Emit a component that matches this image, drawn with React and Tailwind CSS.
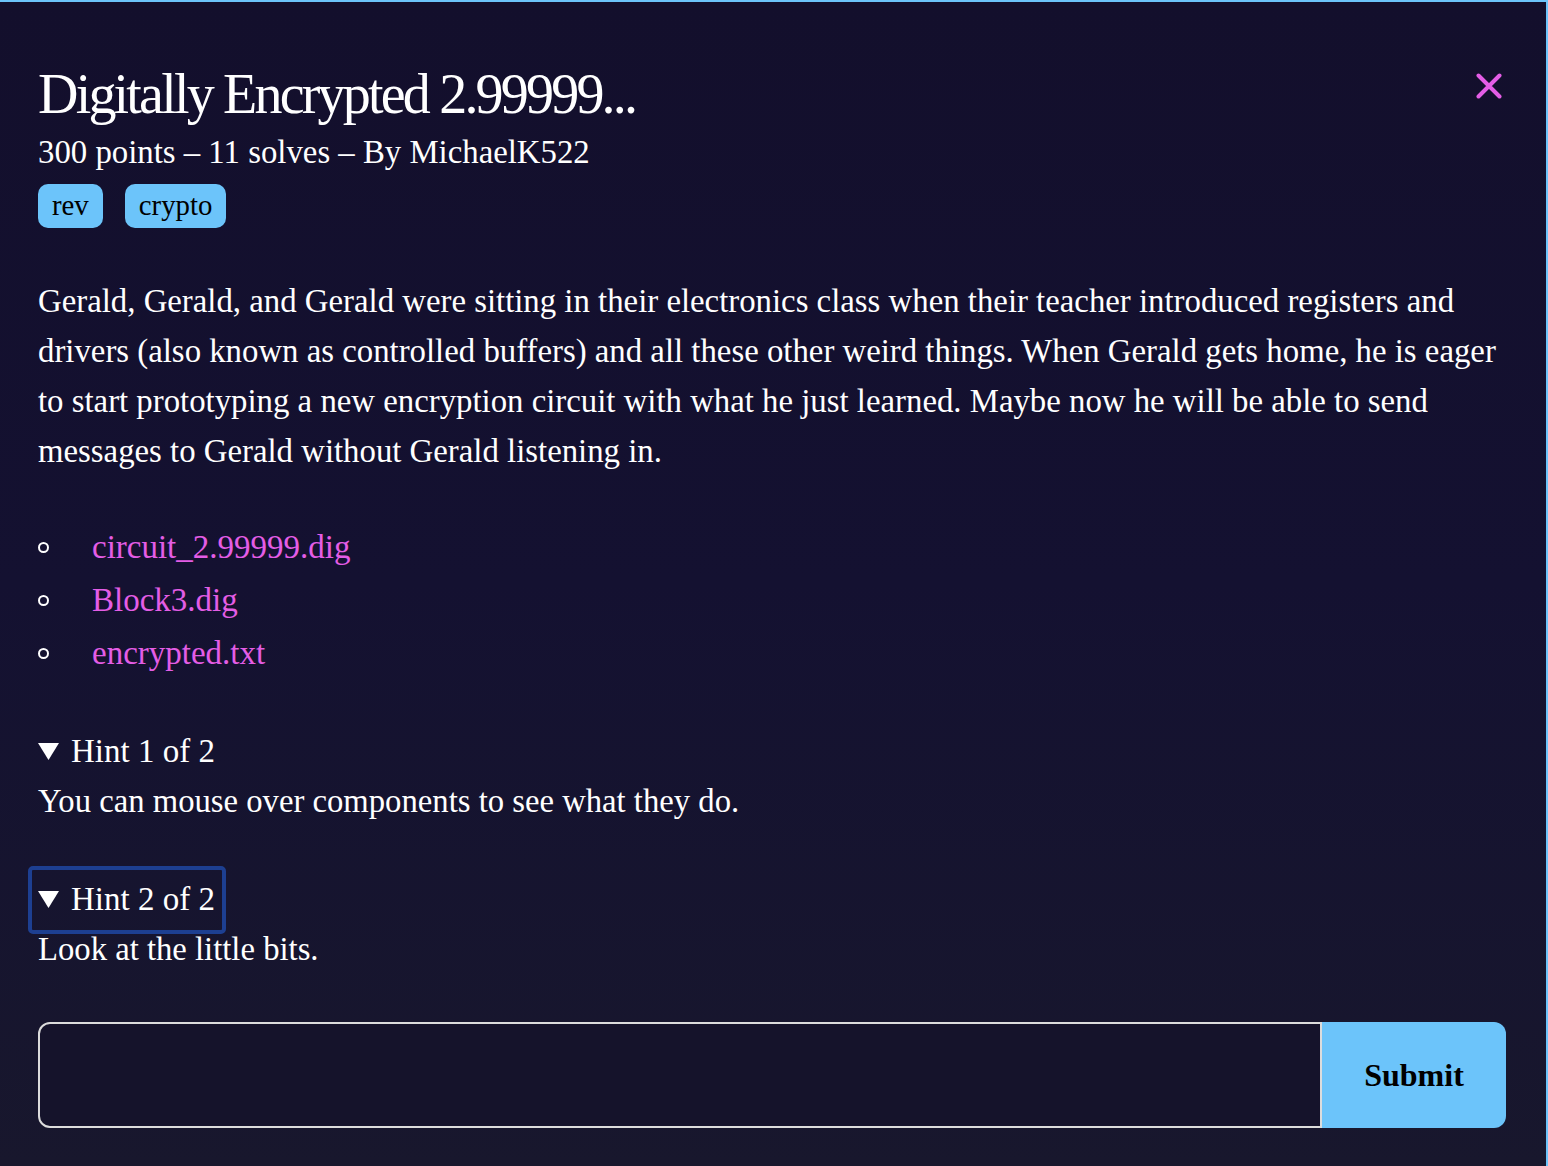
import React from "react";

const serif = { fontFamily: '"Liberation Serif", "Times New Roman", serif' };

function Bullet({ children }) {
  return (
    <li className="flex items-center h-[53px]">
      <span className="w-[11px] h-[11px] rounded-full border-2 border-white ml-[38px] mr-[43px] shrink-0" />
      <a className="text-[33px] text-[#e45de6] leading-none" href="#">{children}</a>
    </li>
  );
}

function Tri() {
  return (
    <svg width="21" height="17" viewBox="0 0 21 17" className="mr-[12px] shrink-0">
      <path d="M0 0H21L10.5 17Z" fill="white" />
    </svg>
  );
}

export default function App() {
  return (
    <div
      className="w-[1548px] h-[1166px] overflow-hidden border-t-2 border-r-2 border-[#6cc4fa] bg-gradient-to-b from-[#130f2c] via-[#141131] to-[#18172d] text-white relative"
      style={serif}
    >
      <button className="absolute left-[1475px] top-[70px] w-[28px] h-[28px] flex items-center justify-center">
        <svg width="26" height="26" viewBox="0 0 26 26" fill="none">
          <path d="M2.5 2.5L23.5 23.5M23.5 2.5L2.5 23.5" stroke="#e45de6" strokeWidth="4" strokeLinecap="round" />
        </svg>
      </button>
      <div className="pl-[38px] pr-[40px] pt-[60px]">
        <h1 className="text-[56px] leading-[64px] tracking-[-2.8px] h-[64px] whitespace-nowrap">Digitally Encrypted 2.99999...</h1>
        <p className="text-[32.8px] leading-[40px] mt-[6px]">300 points – 11 solves – By MichaelK522</p>
        <div className="flex gap-[22px] mt-[12px]">
          <span className="h-[44px] px-[14px] rounded-[10px] bg-[#6cc4fa] text-black text-[28.8px] flex items-center">rev</span>
          <span className="h-[44px] px-[14px] rounded-[10px] bg-[#6cc4fa] text-black text-[28.8px] flex items-center">crypto</span>
        </div>
        <p className="text-[32.8px] leading-[50px] mt-[48px]">
          Gerald, Gerald, and Gerald were sitting in their electronics class when their teacher introduced registers and drivers (also known as controlled buffers) and all these other weird things. When Gerald gets home, he is eager to start prototyping a new encryption circuit with what he just learned. Maybe now he will be able to send messages to Gerald without Gerald listening in.
        </p>
      </div>
      <ul className="mt-[45px]">
        <Bullet>circuit_2.99999.dig</Bullet>
        <Bullet>Block3.dig</Bullet>
        <Bullet>encrypted.txt</Bullet>
      </ul>
      <div className="pl-[38px] mt-[46px]">
        <div className="h-[50px] flex items-center">
          <span className="text-[33px] leading-none flex items-center"><Tri />Hint 1 of 2</span>
        </div>
        <p className="text-[32.7px] leading-[50px]">You can mouse over components to see what they do.</p>
        <div className="h-[50px] flex items-center mt-[48px]">
          <span className="relative text-[33px] leading-none flex items-center">
            <Tri />Hint 2 of 2
            <span className="absolute left-[-10px] right-[-11px] top-[-17px] bottom-[-18px] border-4 border-[#1d3f91] rounded-[5px]" />
          </span>
        </div>
        <p className="text-[32.7px] leading-[50px]">Look at the little bits.</p>
        <div className="flex mt-[48px] w-[1468px] h-[106px]">
          <input className="flex-1 h-full border-2 border-[#dcdcdc] rounded-l-[12px] bg-[#15132b] outline-none" />
          <button className="w-[184px] h-full bg-[#6cc4fa] rounded-r-[12px] text-black text-[32px] font-bold">Submit</button>
        </div>
      </div>
    </div>
  );
}
